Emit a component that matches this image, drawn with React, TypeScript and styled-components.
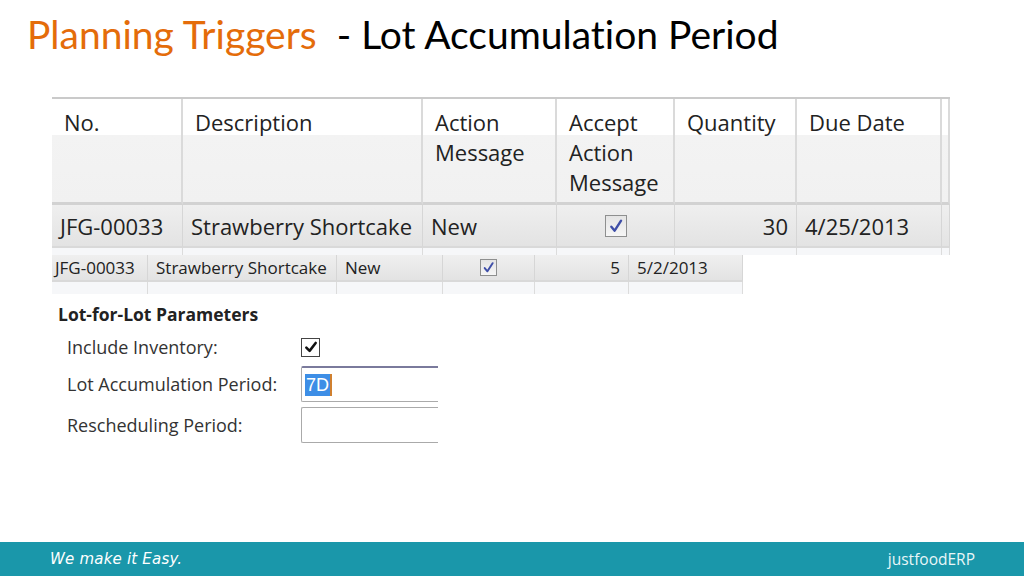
import React from 'react'
import styled, { createGlobalStyle } from 'styled-components'

const GlobalStyle = createGlobalStyle`
   html, body { margin: 0; padding: 0; background: #fff; }
   body { font-family: 'Open Sans', 'Liberation Sans', sans-serif; }
`

const Page = styled.div`
   width: 1024px;
   height: 576px;
   display: flex;
   flex-direction: column;
   overflow: hidden;
`

const Title = styled.h1`
   margin: 0;
   padding: 11px 0 0 27px;
   height: 85px;
   box-sizing: border-box;
   font-family: Lato, 'Open Sans', sans-serif;
   font-variant-ligatures: none;
   font-weight: 400;
   font-size: 39px;
   line-height: 46px;
   color: #000;
   display: flex;
   gap: 20px;
`

const Accent = styled.span`
   color: #e46c0a;
`

const Body = styled.div`
   flex: 1;
   padding: 12px 0 0 52px;
   display: flex;
   flex-direction: column;
`

const Grid = styled.div<{ $cols: string }>`
   display: grid;
   grid-template-columns: ${p => p.$cols};
`

const BigTable = styled.div`
   width: 898px;
   border-top: 2px solid #cacaca;
   font-size: 22px;
   color: #222;
`

const HeadCell = styled.div<{ $empty?: boolean }>`
   height: 106px;
   box-sizing: border-box;
   padding: ${p => (p.$empty ? '0' : '8px 10px 0 12px')};
   line-height: 30px;
   white-space: nowrap;
   background: linear-gradient(to bottom, #fff 0, #fff 36px, #f3f3f3 36px, #f1f1f1 100%);
   border-right: 2px solid #dadada;
   border-bottom: 3px solid #d2d2d2;
`

const RowCell = styled.div<{ $align?: string; $h: number }>`
   height: ${p => p.$h}px;
   box-sizing: border-box;
   display: flex;
   align-items: center;
   justify-content: ${p => p.$align || 'flex-start'};
   padding: 0 8px;
   white-space: nowrap;
   background: linear-gradient(to bottom, #efefef, #e3e3e3);
   border-right: 1px solid #d6d6d6;
   border-bottom: 2px solid #d9d9d9;
`

const StripCell = styled.div<{ $h: number }>`
   height: ${p => p.$h}px;
   background: #f6f7f9;
   border-right: 1px solid #dcdcdc;
`

const SmallTable = styled.div`
   width: 691px;
   font-size: 17px;
   color: #222;
`

const TickBox = styled.span<{ $size: number }>`
   width: ${p => p.$size}px;
   height: ${p => p.$size}px;
   box-sizing: border-box;
   border: 1px solid #8e8f8f;
   background: linear-gradient(to bottom, #e4e4e4, #f6f6f6);
   display: inline-flex;
   align-items: center;
   justify-content: center;
`

const Params = styled.div`
   padding: 10px 0 0 6px;
   font-size: 18px;
   color: #333;
`

const ParamsHeading = styled.div`
   font-weight: 700;
   font-size: 17.5px;
   color: #222;
   line-height: 20px;
   margin-bottom: 12px;
`

const ParamRow = styled.div<{ $compact?: boolean }>`
   display: grid;
   grid-template-columns: 234px 137px;
   align-items: center;
   padding-left: 9px;
   min-height: ${p => (p.$compact ? '22px' : '36px')};
   margin-bottom: ${p => (p.$compact ? '8px' : '5px')};
`

const Label = styled.span`
   line-height: 22px;
`

const FieldBox = styled.div<{ $focus?: boolean }>`
   height: 36px;
   box-sizing: border-box;
   border: 1px solid #aaa;
   border-right: none;
   border-top-color: ${p => (p.$focus ? '#7a7a9c' : '#aaa')};
   border-top-width: ${p => (p.$focus ? '2px' : '1px')};
   border-radius: 2px 0 0 2px;
   display: flex;
   align-items: center;
   padding-left: 3px;
`

const Selected = styled.span`
   background: #3d8ee6;
   color: #fff;
   font-family: 'Liberation Sans', sans-serif;
   font-size: 18px;
   line-height: 22px;
   padding: 0 1px;
   border-right: 2px solid #d08030;
`

const CheckSquare = styled.span`
   width: 19px;
   height: 19px;
   box-sizing: border-box;
   border: 1px solid #444;
   display: inline-flex;
   align-items: center;
   justify-content: center;
   background: #fff;
`

const Footer = styled.footer`
   height: 34px;
   background: #1a97aa;
   display: flex;
   align-items: center;
   justify-content: space-between;
   padding: 0 49px 0 50px;
   color: #fff;
`

const Slogan = styled.span`
   font-family: 'DejaVu Sans', sans-serif;
   font-style: italic;
   font-size: 15px;
   letter-spacing: 0.2px;
`

const Brand = styled.span`
   font-family: 'Open Sans', sans-serif;
   font-size: 15.5px;
   color: #e8f6f8;
`

const BlueTick = ({ size }: { size: number }) => (
   <svg width={size} height={size} viewBox="0 0 12 12">
      <path d="M2.5 6.5 L5 9.5 L9.8 2" fill="none" stroke="#3f4fa8" strokeWidth="1.8" strokeLinecap="round" strokeLinejoin="round" />
   </svg>
)

const bigCols = '131px 240px 134px 118px 122px 145px 8px'
const smallCols = '96px 189px 106px 92px 94px 114px'

const headers = [['No.'], ['Description'], ['Action', 'Message'], ['Accept', 'Action', 'Message'], ['Quantity'], ['Due Date'], []]

const App: React.FC = () => {
   return (
      <Page>
         <GlobalStyle />
         <Title>
            <Accent>Planning Triggers</Accent>
            <span>- Lot Accumulation Period</span>
         </Title>
         <Body>
            <BigTable>
               <Grid $cols={bigCols}>
                  {headers.map((lines, i) => (
                     <HeadCell key={i} $empty={lines.length === 0}>
                        {lines.map((l, j) => <div key={j}>{l}</div>)}
                     </HeadCell>
                  ))}
                  <RowCell $h={43}>JFG-00033</RowCell>
                  <RowCell $h={43}>Strawberry Shortcake</RowCell>
                  <RowCell $h={43}>New</RowCell>
                  <RowCell $h={43} $align="center"><TickBox $size={22}><BlueTick size={16} /></TickBox></RowCell>
                  <RowCell $h={43} $align="flex-end">30</RowCell>
                  <RowCell $h={43}>4/25/2013</RowCell>
                  <RowCell $h={43} style={{ padding: 0 }} />
                  {bigCols.split(' ').map((_, i) => <StripCell key={i} $h={7} />)}
               </Grid>
            </BigTable>
            <SmallTable>
               <Grid $cols={smallCols}>
                  <RowCell $h={27} style={{ paddingLeft: 3 }}>JFG-00033</RowCell>
                  <RowCell $h={27}>Strawberry Shortcake</RowCell>
                  <RowCell $h={27}>New</RowCell>
                  <RowCell $h={27} $align="center"><TickBox $size={17}><BlueTick size={13} /></TickBox></RowCell>
                  <RowCell $h={27} $align="flex-end">5</RowCell>
                  <RowCell $h={27}>5/2/2013</RowCell>
                  {smallCols.split(' ').map((_, i) => <StripCell key={i} $h={12} />)}
               </Grid>
            </SmallTable>
            <Params>
               <ParamsHeading>Lot-for-Lot Parameters</ParamsHeading>
               <ParamRow $compact>
                  <Label>Include Inventory:</Label>
                  <CheckSquare>
                     <svg width="14" height="14" viewBox="0 0 12 12">
                        <path d="M2 6.5 L4.8 9.3 L10 2.5" fill="none" stroke="#111" strokeWidth="2.2" strokeLinecap="round" strokeLinejoin="round" />
                     </svg>
                  </CheckSquare>
               </ParamRow>
               <ParamRow>
                  <Label>Lot Accumulation Period:</Label>
                  <FieldBox $focus><Selected>7D</Selected></FieldBox>
               </ParamRow>
               <ParamRow>
                  <Label>Rescheduling Period:</Label>
                  <FieldBox />
               </ParamRow>
            </Params>
         </Body>
         <Footer>
            <Slogan>We make it Easy.</Slogan>
            <Brand>justfoodERP</Brand>
         </Footer>
      </Page>
   )
}

export default App
